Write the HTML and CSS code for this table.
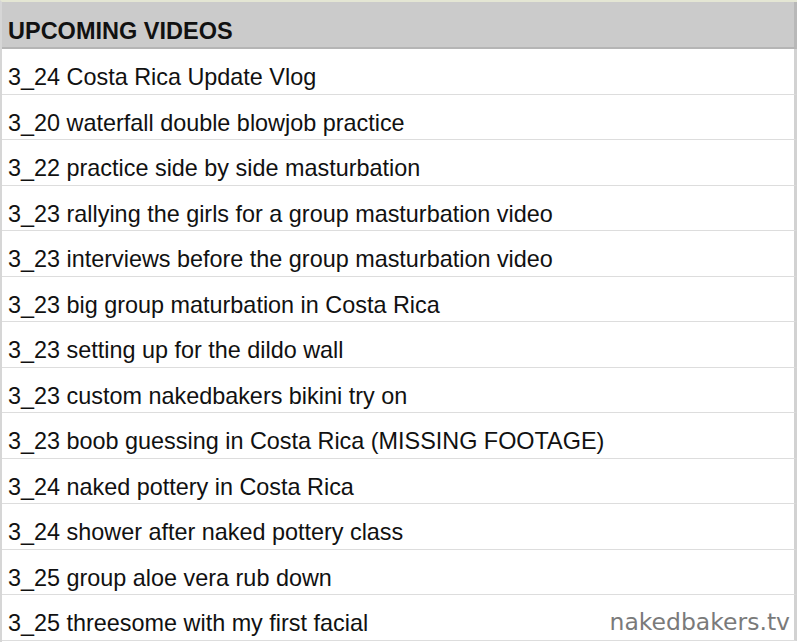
FILE: index.html
```html
<!DOCTYPE html>
<html>
<head>
<meta charset="utf-8">
<link rel="stylesheet" href="styles.css">
</head>
<body>
<div class="sheet">
  <div class="header">UPCOMING VIDEOS</div>
  <div class="row">3_24 Costa Rica Update Vlog</div>
  <div class="row">3_20 waterfall double blowjob practice</div>
  <div class="row">3_22 practice side by side masturbation</div>
  <div class="row">3_23 rallying the girls for a group masturbation video</div>
  <div class="row">3_23 interviews before the group masturbation video</div>
  <div class="row">3_23 big group maturbation in Costa Rica</div>
  <div class="row">3_23 setting up for the dildo wall</div>
  <div class="row">3_23 custom nakedbakers bikini try on</div>
  <div class="row">3_23 boob guessing in Costa Rica (MISSING FOOTAGE)</div>
  <div class="row">3_24 naked pottery in Costa Rica</div>
  <div class="row">3_24 shower after naked pottery class</div>
  <div class="row">3_25 group aloe vera rub down</div>
  <div class="row last">3_25 threesome with my first facial<span class="mark">nakedbakers.tv</span></div>
</div>
</body>
</html>
```
FILE: styles.css
```css
html, body {
  margin: 0;
  padding: 0;
  background: #ffffff;
}
.sheet {
  width: 797px;
  height: 642px;
  overflow: hidden;
  border-top: 2px solid #e4e6d4;
  border-left: 2px solid #d6d6d6;
  box-sizing: border-box;
  font-family: "Liberation Sans", Arial, sans-serif;
  color: #111;
}
.header {
  box-sizing: border-box;
  height: 47px;
  background: #cbcbcb;
  border-right: 3px solid #b8b8b8;
  border-bottom: 2px solid #b5b5b5;
  font-weight: bold;
  font-size: 23.5px;
  line-height: 32px;
  padding-top: 13px;
  padding-left: 6px;
  overflow: hidden;
}
.row {
  box-sizing: border-box;
  height: 45.5px;
  padding-top: 12px;
  line-height: 33.5px;
  border-bottom: 1px solid #dddddd;
  border-right: 3px solid #d2d2d2;
  font-size: 23.4px;
  padding-left: 6px;
  display: flex;
  justify-content: space-between;
  overflow: hidden;
}
.mark {
  font-family: "DejaVu Sans", sans-serif;
  color: #7a7a7a;
  font-size: 23.5px;
  line-height: 31.5px;
  padding-right: 4px;
}
```
